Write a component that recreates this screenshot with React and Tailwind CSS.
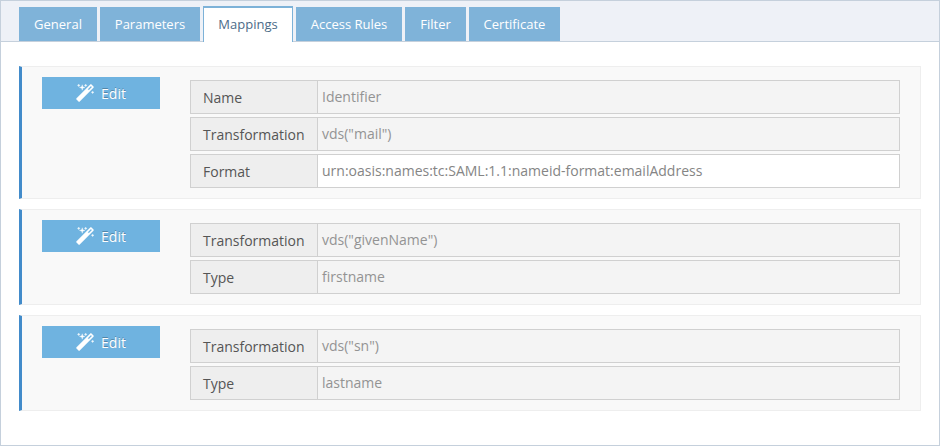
const tabs = [
  { label: 'General', width: 'w-[78px]' },
  { label: 'Parameters', width: 'w-[100px]' },
  { label: 'Mappings', width: 'w-[90px]', active: true },
  { label: 'Access Rules', width: 'w-[106px]' },
  { label: 'Filter', width: 'w-[61px]' },
  { label: 'Certificate', width: 'w-[91px]' },
];

const mappings = [
  [
    { label: 'Name', value: 'Identifier' },
    { label: 'Transformation', value: 'vds("mail")' },
    { label: 'Format', value: 'urn:oasis:names:tc:SAML:1.1:nameid-format:emailAddress', editable: true },
  ],
  [
    { label: 'Transformation', value: 'vds("givenName")' },
    { label: 'Type', value: 'firstname' },
  ],
  [
    { label: 'Transformation', value: 'vds("sn")' },
    { label: 'Type', value: 'lastname' },
  ],
];

function WandIcon() {
  return (
    <svg viewBox="0 0 1664 1664" className="h-[18px] w-[18px]" fill="currentColor" stroke="currentColor" strokeWidth="30" strokeLinejoin="round">
      <path d="M1190 581l293-293-107-107-293 293zM1637 288q0 27-18 45l-1286 1286q-18 18-45 18t-45-18l-198-198q-18-18-18-45t18-45l1286-1286q18-18 45-18t45 18l198 198q18 18 18 45zM286 98l98 30-98 30-30 98-30-98-98-30 98-30 30-98zM636 260l196 60-196 60-60 196-60-196-196-60 196-60 60-196zM1566 738l98 30-98 30-30 98-30-98-98-30 98-30 30-98zM926 98l98 30-98 30-30 98-30-98-98-30 98-30 30-98z" />
    </svg>
  );
}

function Tab({ label, width, active }) {
  return active ? (
    <button className={`${width} -mb-px h-9 border-x border-t-2 border-[#7db2d8] bg-white pb-px text-[#4c6b88]`}>{label}</button>
  ) : (
    <button className={`${width} h-[34px] bg-[#7fb3d9] pt-px text-white`}>{label}</button>
  );
}

function Field({ label, value, editable }) {
  return (
    <div className="flex h-[34px] border border-[#d0d0d0] text-sm leading-5">
      <div className="w-[127px] shrink-0 border-r border-[#d0d0d0] bg-[#eeeeee] pt-[7px] pl-3 text-[#555555]">{label}</div>
      <div className={`flex-1 pt-1.5 pl-1 ${editable ? 'bg-white text-[#858585]' : 'bg-[#f4f4f4] text-[#939393]'}`}>{value}</div>
    </div>
  );
}

function Mapping({ fields }) {
  return (
    <section className="flex items-start border border-l-[3px] border-[#eeeeee] border-l-[#428bca] bg-[#f9f9f9] pr-5 pl-5">
      <button className="mt-2.5 flex h-8 w-[118px] shrink-0 items-center justify-center gap-[7px] bg-[#6fb3e0] text-sm text-white [text-shadow:0_-1px_0_rgba(0,0,0,0.25)]">
        <WandIcon />
        <span className="pt-px">Edit</span>
      </button>
      <div className="ml-[30px] flex flex-1 flex-col gap-[3px] pt-[13px] pb-2.5">
        {fields.map((field) => (
          <Field key={field.label} {...field} />
        ))}
      </div>
    </section>
  );
}

export default function App() {
  return (
    <div className="h-[446px] w-[940px] border border-[#c5d0dc] bg-white font-['Open_Sans',sans-serif]">
      <nav className="flex h-[41px] items-end gap-[3px] border-b border-[#c5d0dc] bg-[#eef1f7] pl-[18px] text-[13px]">
        {tabs.map((tab) => (
          <Tab key={tab.label} {...tab} />
        ))}
      </nav>
      <main className="flex flex-col gap-2.5 px-[18px] pt-6">
        {mappings.map((fields, i) => (
          <Mapping key={i} fields={fields} />
        ))}
      </main>
    </div>
  );
}
